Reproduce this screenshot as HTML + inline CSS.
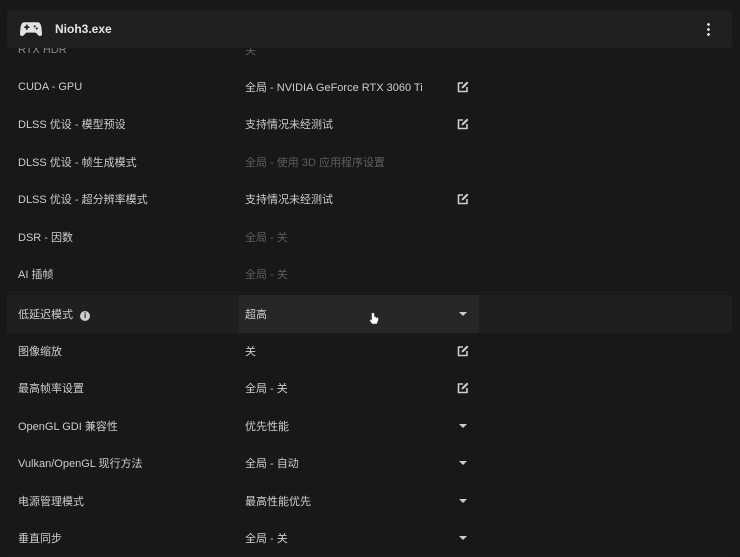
<!DOCTYPE html>
<html><head><meta charset="utf-8"><style>
*{margin:0;padding:0;box-sizing:border-box}
body{width:740px;height:552px;background:#181818;overflow:hidden;position:relative;font-family:"Liberation Sans","Noto Sans CJK SC",sans-serif;font-size:11px;color:#cdcdcd}
.row{position:absolute;left:7px;width:722px;height:37px;border-bottom:1px solid #1c1c1c}
.l{position:absolute;left:11px;top:50%;transform:translateY(-50%);white-space:nowrap}
.v{position:absolute;left:238px;top:50%;transform:translateY(-50%);white-space:nowrap}
.d{color:#5e5e5e}
.ic{position:absolute;left:450px;top:50%;transform:translateY(-50%);width:12px;height:12px}
.ar{position:absolute;left:452px;top:50%;margin-top:-2px;width:0;height:0;border-left:4px solid transparent;border-right:4px solid transparent;border-top:4px solid #ccc}
.hdr{position:absolute;left:7px;top:10px;width:725px;height:38px;background:#202020;border-radius:4px;z-index:2}
</style></head><body>
<div class="hdr">
<svg style="position:absolute;left:13px;top:11px" width="22" height="16" viewBox="0 0 21 15"><path d="M4 1h13c2 0 3 2 3.5 5l.5 6c0 2-2 3-3.5 1.5L15 11H6l-2.5 2.5C2 15 0 14 0 12l.5-6C1 3 2 1 4 1z" fill="#e2e2e2"/><rect x="4" y="5" width="5" height="1.6" fill="#202020"/><rect x="5.7" y="3.3" width="1.6" height="5" fill="#202020"/><circle cx="14" cy="5" r="1" fill="#202020"/><circle cx="16" cy="7" r="1" fill="#202020"/></svg>
<div style="position:absolute;left:48px;top:12px;font-weight:bold;font-size:12px;color:#e6e6e6">Nioh3.exe</div>
<div style="position:absolute;left:700px;top:12px;width:3px;height:14px;background:radial-gradient(circle,#ddd 1.3px,transparent 1.5px) 0 0/3px 5px"></div>
</div>

<div class="row" style="top:31px"><span class="l" style="top:19px;color:#888">RTX HDR</span><span class="v d" style="top:19px">关</span></div>
<div class="row" style="top:69px"><span class="l">CUDA - GPU</span><span class="v">全局 - NVIDIA GeForce RTX 3060 Ti</span><svg class="ic" viewBox="0 0 12 12"><path d="M6 2H1.5v8.5H10V6" fill="none" stroke="#ccc" stroke-width="1.6"/><path d="M4.5 7.5l.4-2L10 .5l1.5 1.5-5 5z" fill="#ccc"/></svg></div>
<div class="row" style="top:106px"><span class="l">DLSS 优设 - 模型预设</span><span class="v">支持情况未经测试</span><svg class="ic" viewBox="0 0 12 12"><path d="M6 2H1.5v8.5H10V6" fill="none" stroke="#ccc" stroke-width="1.6"/><path d="M4.5 7.5l.4-2L10 .5l1.5 1.5-5 5z" fill="#ccc"/></svg></div>
<div class="row" style="top:144px"><span class="l">DLSS 优设 - 帧生成模式</span><span class="v d">全局 - 使用 3D 应用程序设置</span></div>
<div class="row" style="top:181px"><span class="l">DLSS 优设 - 超分辨率模式</span><span class="v">支持情况未经测试</span><svg class="ic" viewBox="0 0 12 12"><path d="M6 2H1.5v8.5H10V6" fill="none" stroke="#ccc" stroke-width="1.6"/><path d="M4.5 7.5l.4-2L10 .5l1.5 1.5-5 5z" fill="#ccc"/></svg></div>
<div class="row" style="top:219px"><span class="l">DSR - 因数</span><span class="v d">全局 - 关</span></div>
<div class="row" style="top:256px"><span class="l">AI 插帧</span><span class="v d">全局 - 关</span></div>
<div class="row" style="top:295px;background:#1f1f1f;border:none;height:38px;width:725px"><span class="l">低延迟模式 <span style="display:inline-block;width:10px;height:10px;border-radius:50%;background:#ccc;color:#1f1f1f;font-size:8px;font-weight:bold;text-align:center;line-height:10px;margin-left:4px;vertical-align:0">i</span></span>
<div style="position:absolute;left:232px;top:0;width:240px;height:38px;background:#272727"><span class="v" style="left:6px">超高</span><span class="ar" style="left:220px"></span></div>
<svg style="position:absolute;left:362px;top:17px" width="10" height="13" viewBox="0 0 10 13"><path d="M2.5 1v7L1 7l-.5 1.5L3 12h5l1.5-4V5.5H7V4.5H5.5V1.5C5 0.5 3 0.5 2.5 1z" fill="#fff" stroke="#333" stroke-width=".6"/></svg></div>
<div class="row" style="top:333px"><span class="l">图像缩放</span><span class="v">关</span><svg class="ic" viewBox="0 0 12 12"><path d="M6 2H1.5v8.5H10V6" fill="none" stroke="#ccc" stroke-width="1.6"/><path d="M4.5 7.5l.4-2L10 .5l1.5 1.5-5 5z" fill="#ccc"/></svg></div>
<div class="row" style="top:370px"><span class="l">最高帧率设置</span><span class="v">全局 - 关</span><svg class="ic" viewBox="0 0 12 12"><path d="M6 2H1.5v8.5H10V6" fill="none" stroke="#ccc" stroke-width="1.6"/><path d="M4.5 7.5l.4-2L10 .5l1.5 1.5-5 5z" fill="#ccc"/></svg></div>
<div class="row" style="top:408px"><span class="l">OpenGL GDI 兼容性</span><span class="v">优先性能</span><span class="ar"></span></div>
<div class="row" style="top:445px"><span class="l">Vulkan/OpenGL 现行方法</span><span class="v">全局 - 自动</span><span class="ar"></span></div>
<div class="row" style="top:483px"><span class="l">电源管理模式</span><span class="v">最高性能优先</span><span class="ar"></span></div>
<div class="row" style="top:520px"><span class="l">垂直同步</span><span class="v">全局 - 关</span><span class="ar"></span></div>
</body></html>
